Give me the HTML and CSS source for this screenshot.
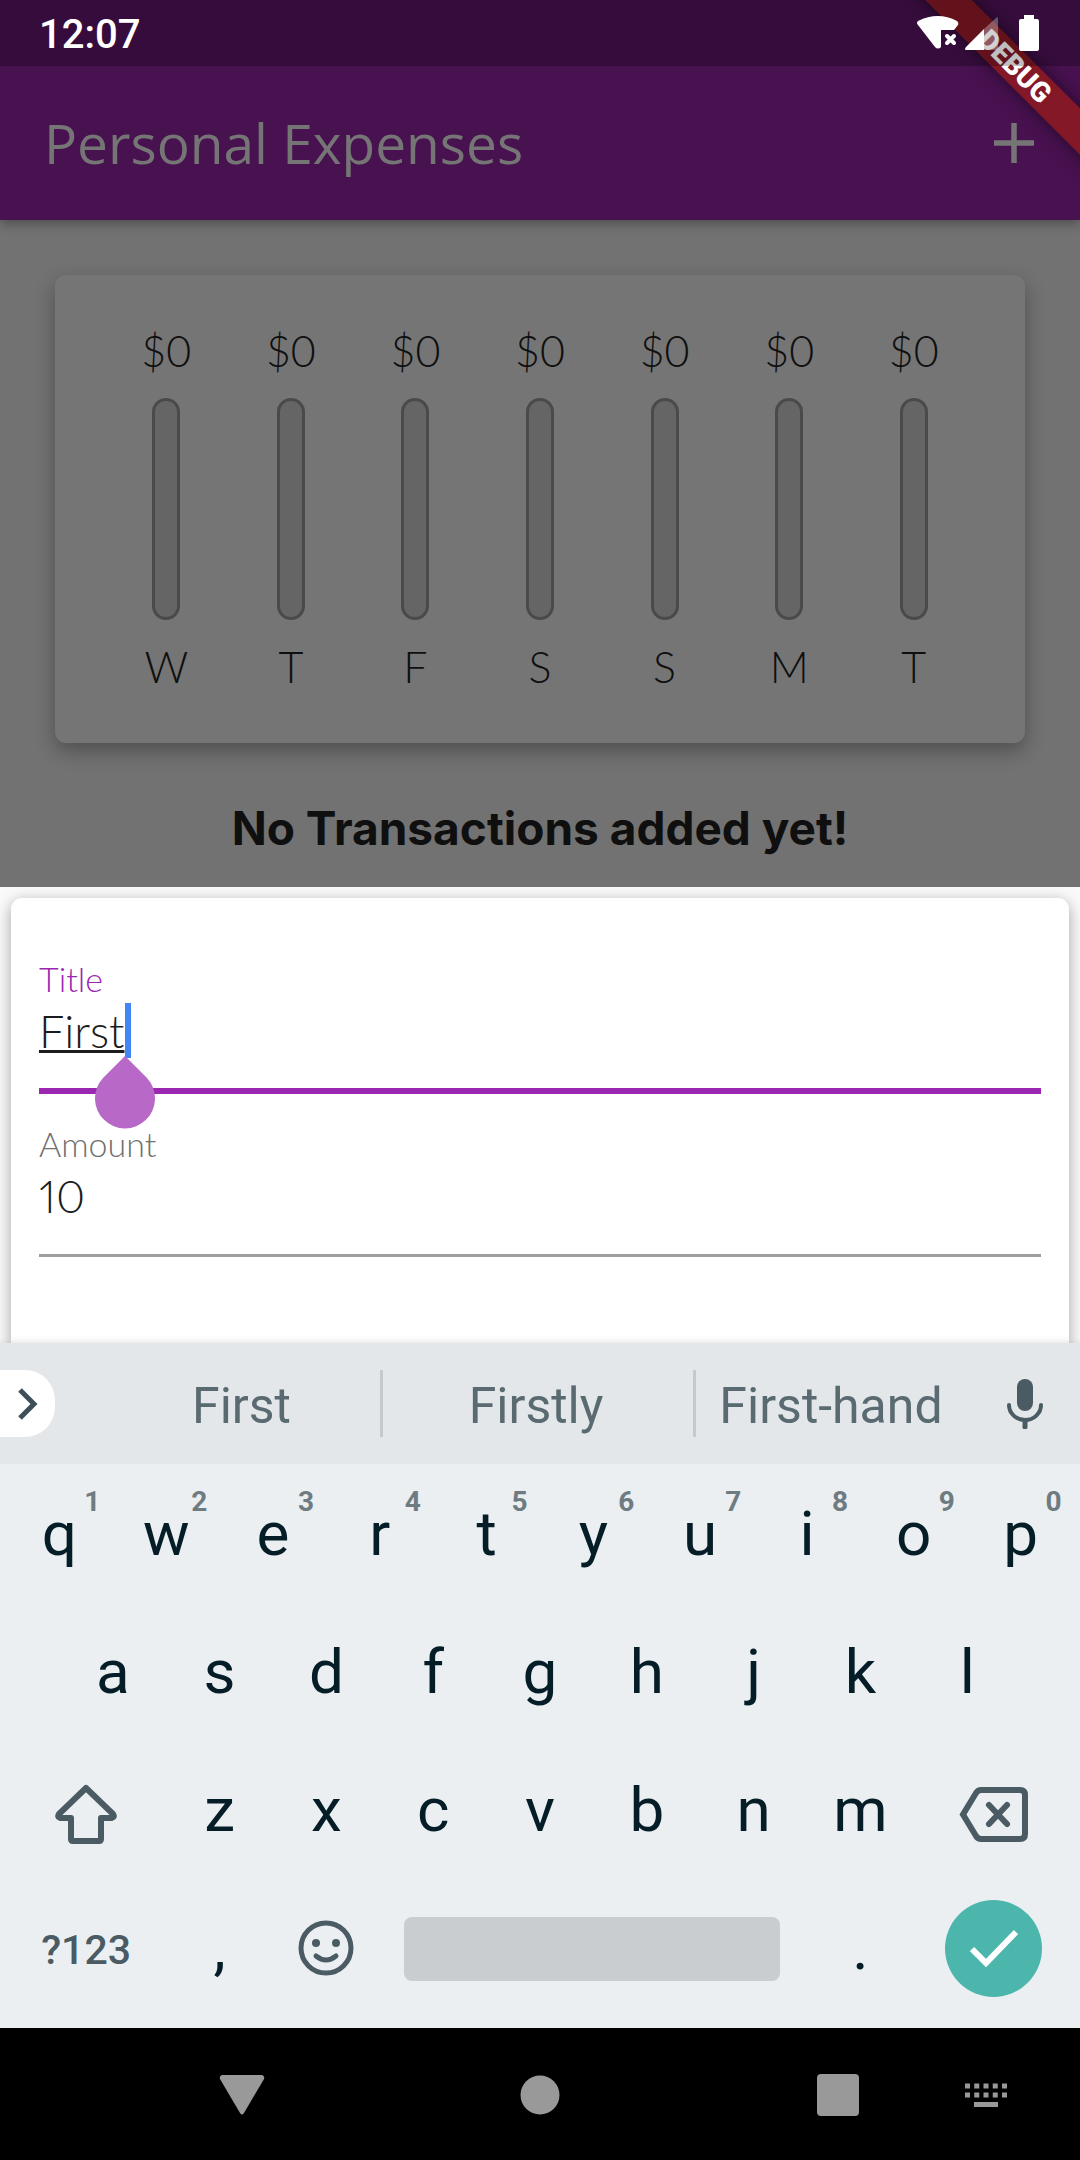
FILE: index.html
```html
<!DOCTYPE html>
<html lang="en">
<head>
<meta charset="utf-8">
<meta name="viewport" content="width=device-width, initial-scale=1">
<title>Personal Expenses</title>
<link rel="stylesheet" href="styles.css">
</head>
<body>
<header class="top">
  <div class="ribbon-corner"><div class="ribbon">DEBUG</div></div>
  <div class="status">
    <span class="clock">12:07</span>
    <svg class="status-icons" width="122" height="36" viewBox="0 0 122 36" aria-hidden="true">
      <path fill="#fff" d="M1 10Q-1 8 1 6Q21-4 40 6Q42 8 41 10L37 15H24V32Q21 35 18 32Z"/>
      <path fill="none" stroke="#fff" stroke-width="4" stroke-linecap="round" d="M30 21L37 28M37 21L30 28"/>
      <path fill="#fff" fill-opacity=".3" d="M67 14L79 3Q81 1 81 4V33Q81 35 79 35H67Z"/>
      <path fill="#fff" d="M67 14V35H49Q47 35 49 32Z"/>
      <path fill="#fff" d="M107 0H117V4H120Q122 4 122 6V34Q122 36 120 36H104Q102 36 102 34V6Q102 4 104 4H107Z"/>
    </svg>
  </div>
  <div class="appbar">
    <h1 class="app-title">Personal Expenses</h1>
    <button class="add" type="button" aria-label="Add transaction">
      <svg width="40" height="40" viewBox="0 0 40 40"><path fill="none" stroke="#757575" stroke-width="5.500" d="M20 0V40M0 20H40"/></svg>
    </button>
  </div>
</header>

<main class="page">
  <section class="chart" aria-label="Spending this week">
    <div class="day"><span>$0</span><span class="bar"></span><span>W</span></div>
    <div class="day"><span>$0</span><span class="bar"></span><span>T</span></div>
    <div class="day"><span>$0</span><span class="bar"></span><span>F</span></div>
    <div class="day"><span>$0</span><span class="bar"></span><span>S</span></div>
    <div class="day"><span>$0</span><span class="bar"></span><span>S</span></div>
    <div class="day"><span>$0</span><span class="bar"></span><span>M</span></div>
    <div class="day"><span>$0</span><span class="bar"></span><span>T</span></div>
  </section>
  <h2 class="empty">No Transactions added yet!</h2>
</main>

<section class="sheet">
  <form class="form">
    <div class="field active">
      <label for="title">Title</label>
      <input id="title" type="text" value="First">
      <span class="caret"></span>
      <svg class="handle" width="60" height="73" viewBox="0 0 60 73" aria-hidden="true"><path fill="#b868c7" d="M30 0L52 22A30 30 0 1 1 8 22Z"/></svg>
    </div>
    <div class="field">
      <label for="amount">Amount</label>
      <input id="amount" type="text" inputmode="decimal" value="10">
    </div>
  </form>
</section>

<section class="keyboard" aria-label="Keyboard">
  <div class="suggestions">
    <button class="expand" type="button" aria-label="More"><svg width="20" height="32" viewBox="0 0 20 32"><path fill="none" stroke="#3d4f58" stroke-width="5" d="M2 2L16 16L2 30"/></svg></button>
    <button class="word" type="button">First</button>
    <button class="word" type="button">Firstly</button>
    <button class="word" type="button">First-hand</button>
    <button class="mic" type="button" aria-label="Voice input"><svg width="36" height="50" viewBox="0 0 36 50"><rect x="10" y="0" width="16" height="32" rx="8" fill="#4a5b63"/><path fill="none" stroke="#4a5b63" stroke-width="4" stroke-linecap="round" d="M2 26A16 15 0 0 0 34 26"/><path fill="none" stroke="#4a5b63" stroke-width="5" stroke-linecap="round" d="M18 42V48"/></svg></button>
  </div>
  <div class="keys">
    <button class="key" type="button">q<sup>1</sup></button>
    <button class="key" type="button">w<sup>2</sup></button>
    <button class="key" type="button">e<sup>3</sup></button>
    <button class="key" type="button">r<sup>4</sup></button>
    <button class="key" type="button">t<sup>5</sup></button>
    <button class="key" type="button">y<sup>6</sup></button>
    <button class="key" type="button">u<sup>7</sup></button>
    <button class="key" type="button">i<sup>8</sup></button>
    <button class="key" type="button">o<sup>9</sup></button>
    <button class="key" type="button">p<sup>0</sup></button>

    <button class="key indent" type="button">a</button>
    <button class="key" type="button">s</button>
    <button class="key" type="button">d</button>
    <button class="key" type="button">f</button>
    <button class="key" type="button">g</button>
    <button class="key" type="button">h</button>
    <button class="key" type="button">j</button>
    <button class="key" type="button">k</button>
    <button class="key" type="button">l</button>

    <button class="key wide edit" type="button" aria-label="Shift"><svg width="62" height="60" viewBox="0 0 62 60"><path fill="none" stroke="#4a5b63" stroke-width="6" stroke-linejoin="round" d="M16 34H5Q2 33 4 30L31 4L58 30Q60 33 57 34H46V55Q46 57 44 57H18Q16 57 16 55Z"/></svg></button>
    <button class="key" type="button">z</button>
    <button class="key" type="button">x</button>
    <button class="key" type="button">c</button>
    <button class="key" type="button">v</button>
    <button class="key" type="button">b</button>
    <button class="key" type="button">n</button>
    <button class="key" type="button">m</button>
    <button class="key wide edit" type="button" aria-label="Backspace"><svg width="70" height="55" viewBox="0 0 70 55"><path fill="none" stroke="#4a5b63" stroke-width="6" d="M22 3H61Q66 3 66 8V47Q66 52 61 52H22Q19 52 17 49L4 27.500L17 6Q19 3 22 3Z"/><path fill="none" stroke="#4a5b63" stroke-width="6" stroke-linecap="round" d="M30 18L48 37M48 18L30 37"/></svg></button>

    <button class="key wide symbols" type="button">?123</button>
    <button class="key" type="button">,</button>
    <button class="key" type="button" aria-label="Emoji"><svg width="56" height="56" viewBox="0 0 56 56"><circle cx="28" cy="28" r="25" fill="none" stroke="#4a5b63" stroke-width="5"/><circle cx="18" cy="23" r="4" fill="#4a5b63"/><circle cx="38" cy="23" r="4" fill="#4a5b63"/><path fill="none" stroke="#4a5b63" stroke-width="5" stroke-linecap="round" d="M18 36Q28 44 38 36"/></svg></button>
    <button class="key space" type="button" aria-label="Space"></button>
    <button class="key" type="button">.</button>
    <button class="key wide" type="button" aria-label="Done"><span class="done"><svg width="48" height="38" viewBox="0 0 48 38"><path fill="none" stroke="#fff" stroke-width="6" d="M2 20L16 34L46 3"/></svg></span></button>
  </div>
</section>

<nav class="system">
  <button type="button" aria-label="Back"><svg width="46" height="40" viewBox="0 0 46 40"><path fill="#999" d="M3 0H43Q46 1 45 4L25 38Q23 41 21 38L1 4Q0 1 3 0Z"/></svg></button>
  <button type="button" aria-label="Home"><svg width="40" height="40" viewBox="0 0 40 40"><circle cx="20" cy="20" r="19.500" fill="#999"/></svg></button>
  <button type="button" aria-label="Recent apps"><svg width="42" height="42" viewBox="0 0 42 42"><rect width="42" height="42" rx="4" fill="#999"/></svg></button>
  <button type="button" aria-label="Choose keyboard"><svg width="42" height="24" viewBox="0 0 42 24"><path fill="none" stroke="#999" stroke-width="5" stroke-dasharray="5 4.250" d="M0 3H42M0 12H42"/><path fill="#999" d="M9 19H33V24H9Z"/></svg></button>
</nav>
</body>
</html>
```
FILE: styles.css
```css
* { box-sizing: border-box; }

body {
  margin: 0;
  min-height: 100vh;
  display: flex;
  flex-direction: column;
  background: #000;
  font-family: Lato, sans-serif;
}

button {
  margin: 0;
  padding: 0;
  border: 0;
  background: none;
  font: inherit;
  color: inherit;
  display: flex;
  align-items: center;
  justify-content: center;
}

svg { display: block; }

/* Status bar and app bar */
.top {
  position: relative;
  z-index: 1;
  background: #481150;
  box-shadow: 0 4px 10px rgba(0, 0, 0, .3);
}

.status {
  position: relative;
  z-index: 2;
  height: 66px;
  padding: 0 41px 0 39px;
  display: flex;
  align-items: center;
  justify-content: space-between;
  background: rgba(0, 0, 0, .25);
}

.clock {
  padding-top: 3px;
  font: 500 40px/48px Roboto, sans-serif;
  color: #fff;
}

.appbar {
  height: 154px;
  padding: 0 46px 0 44px;
  display: flex;
  align-items: center;
  justify-content: space-between;
}

.app-title {
  margin: 0;
  font: 400 55px/76px "Open Sans", sans-serif;
  color: #757575;
}

.ribbon-corner {
  position: absolute;
  top: 0;
  right: 0;
  width: 220px;
  height: 220px;
  overflow: hidden;
  z-index: 1;
}

.ribbon {
  position: absolute;
  top: 50px;
  left: 15px;
  width: 280px;
  background: #841826;
  box-shadow: 0 0 18px rgba(0, 0, 0, .5);
  transform: rotate(45deg);
  font: 900 28px/33px Roboto, sans-serif;
  color: #fff;
  text-align: center;
}

/* Weekly chart */
.page {
  padding: 55px 55px 30px;
  background: #727272;
}

.chart {
  padding: 49px;
  display: flex;
  background: #757575;
  border-radius: 11px;
  box-shadow: 0 8px 20px rgba(0, 0, 0, .3);
}

.day {
  flex: 1;
  display: flex;
  flex-direction: column;
  align-items: center;
  gap: 20px;
  font-size: 43px;
  font-weight: 300;
  line-height: 54px;
  color: #0f0f0f;
}

.bar {
  width: 28px;
  height: 222px;
  border: 3px solid #4a4a4a;
  border-radius: 14px;
  background: #656565;
}

.empty {
  margin: 58px 0 0;
  padding-bottom: 1px;
  font: 700 46px/55px Inter, sans-serif;
  text-align: center;
  color: #0f0f0f;
}

/* New transaction sheet */
.sheet {
  flex: 1;
  padding: 11px 11px 0;
  display: flex;
  background: #fafafa;
  overflow: hidden;
}

.form {
  flex: 1;
  padding: 63px 28px 86px;
  display: flex;
  flex-direction: column;
  gap: 32px;
  background: #fff;
  border-radius: 11px 11px 0 0;
  box-shadow: 0 4px 16px rgba(0, 0, 0, .35);
}

.field {
  position: relative;
  display: flex;
  flex-direction: column;
  gap: 6px;
}

.field label {
  font-size: 34px;
  font-weight: 300;
  line-height: 36px;
  color: #707070;
}

.field input {
  height: 89px;
  padding: 0 0 30px;
  border: 0;
  border-bottom: 3px solid #9e9e9e;
  outline: 0;
  background: none;
  font: 300 45px/56px Lato, sans-serif;
  font-variant-numeric: proportional-nums;
  color: #1c1c1c;
}

.active label { color: #9c27b0; }

.active input {
  height: 91px;
  padding-bottom: 29px;
  border-bottom: 6px solid #9c27b0;
  text-decoration: underline 3px;
  text-underline-offset: 2px;
}

.caret {
  position: absolute;
  top: 42px;
  left: 86px;
  width: 6px;
  height: 55px;
  background: #4285f4;
}

.handle {
  position: absolute;
  top: 95px;
  left: 56px;
}

/* Keyboard */
.keyboard {
  position: relative;
  background: #ebeff2;
  box-shadow: 0 0 8px rgba(0, 0, 0, .15);
  font-family: Roboto, sans-serif;
}

.suggestions {
  height: 121px;
  display: grid;
  grid-template-columns: 103px 277fr 313fr 277fr 110px;
  align-items: center;
  background: #e3e7ea;
}

.expand {
  width: 55px;
  height: 67px;
  background: #fff;
  border-radius: 0 30px 30px 0;
}

.word {
  height: 67px;
  padding-top: 4px;
  font-size: 50px;
  line-height: 60px;
  color: #5a6a71;
}

.word + .word {
  padding-right: 4px;
  border-left: 3px solid #c4c9cc;
}

.mic { height: 67px; }

.keys {
  padding: 1px 6px 11px;
  display: grid;
  grid-template-columns: repeat(20, 1fr);
  grid-auto-rows: 138px;
}

.key {
  grid-column: span 2;
  position: relative;
  font-size: 62px;
  line-height: 72px;
  color: #041d27;
}

.key sup {
  position: absolute;
  top: 21px;
  left: 50%;
  width: 66px;
  font-size: 28px;
  font-weight: 700;
  line-height: 32px;
  color: #6e7b81;
}

.key.indent { grid-column: 2 / span 2; }

.key.wide { grid-column: span 3; }

.key.edit { padding-top: 8px; }

.key.symbols {
  padding-top: 3px;
  font-size: 41px;
  font-weight: 500;
  color: #4a5b63;
}

.key.space {
  grid-column: span 8;
  align-self: center;
  height: 64px;
  margin: 2px 27px 0 24px;
  border-radius: 8px;
  background: #c9cdd0;
}

.done {
  width: 97px;
  height: 97px;
  border-radius: 50%;
  display: flex;
  align-items: center;
  justify-content: center;
  background: #4db6ac;
}

/* System navigation */
.system {
  height: 132px;
  padding: 2px 54px 0 202px;
  display: grid;
  grid-template-columns: 298fr 298fr 148fr 80px;
  align-items: center;
  background: #000;
}

.system button {
  width: 80px;
  height: 80px;
}
```
